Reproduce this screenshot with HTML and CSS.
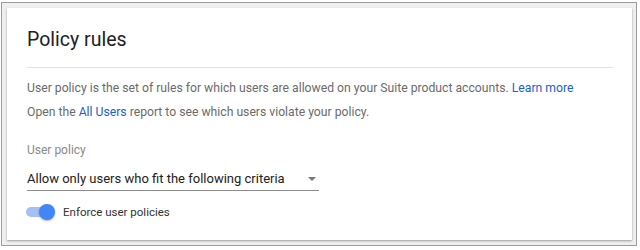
FILE: index.html
```html
<!DOCTYPE html>
<html lang="en">
<head>
  <meta charset="UTF-8" />
  <title>Policy rules</title>
  <link rel="stylesheet" href="styles.css">
</head>
<body>
  <div class="frame">
    <div class="card">
      <h1 class="title">Policy rules</h1>
      <p class="desc">User policy is the set of rules for which users are allowed on your Suite product accounts. <a href="#">Learn more</a></p>
      <p class="desc">Open the <a href="#">All Users</a> report to see which users violate your policy.</p>

      <div class="field">
        <label class="field-label">User policy</label>
        <div class="select">
          <span>Allow only users who fit the following criteria</span>
          <span class="arrow"></span>
        </div>
      </div>

      <label class="toggle">
        <span class="track"><span class="thumb"></span></span>
        Enforce user policies
      </label>
    </div>
  </div>
</body>
</html>
```

FILE: styles.css
```css
body {
  margin: 0;
  font-family: Roboto, "Liberation Sans", sans-serif;
  background: #fff;
}
.frame {
  margin: 2px 3px 4px 1px;
  border: 1px solid #9c9c9c;
  background: #efefef;
  padding: 5px 4px 5px 5px;
  height: 244px;
  box-sizing: border-box;
}
.card {
  background: #fff;
  box-shadow: 0 1px 2px rgba(0, 0, 0, 0.35);
  height: 100%;
  padding: 0 19px 0 20px;
  box-sizing: border-box;
  overflow: hidden;
}
.title {
  margin: 0;
  padding: 19px 0 14px;
  font-size: 19.5px;
  font-weight: 400;
  color: #202124;
  border-bottom: 1px solid #e0e0e0;
  line-height: 26px;
}
.desc {
  margin: 0;
  font-size: 12.2px;
  line-height: 24px;
  color: #6b6b6b;
}
.title + .desc {
  margin-top: 8px;
}
.desc a {
  color: #1a5fd0;
  text-decoration: none;
}
.field {
  margin-top: 16px;
}
.field-label {
  display: block;
  font-size: 12px;
  color: #8a8a8a;
  line-height: 20px;
}
.select {
  width: 292px;
  display: flex;
  justify-content: space-between;
  align-items: center;
  border-bottom: 1px solid #8c8c8c;
  font-size: 13px;
  line-height: 16px;
  color: #222;
  padding: 3px 0;
  margin-top: 8px;
}
.arrow {
  width: 0;
  height: 0;
  border-left: 4px solid transparent;
  border-right: 4px solid transparent;
  border-top: 4px solid #777;
  margin-right: 3px;
}
.toggle {
  display: flex;
  align-items: center;
  gap: 11px;
  margin-top: 13px;
  font-size: 11.5px;
  line-height: 16px;
  color: #333;
}
.track {
  position: relative;
  display: block;
  width: 26px;
  height: 10px;
  border-radius: 5px;
  background: #a3c1f7;
  margin-left: -1px;
}
.thumb {
  position: absolute;
  right: -3px;
  top: -3px;
  width: 16px;
  height: 16px;
  border-radius: 50%;
  background: #4285f4;
  box-shadow: 0 1px 2px rgba(0, 0, 0, 0.3);
}
```
